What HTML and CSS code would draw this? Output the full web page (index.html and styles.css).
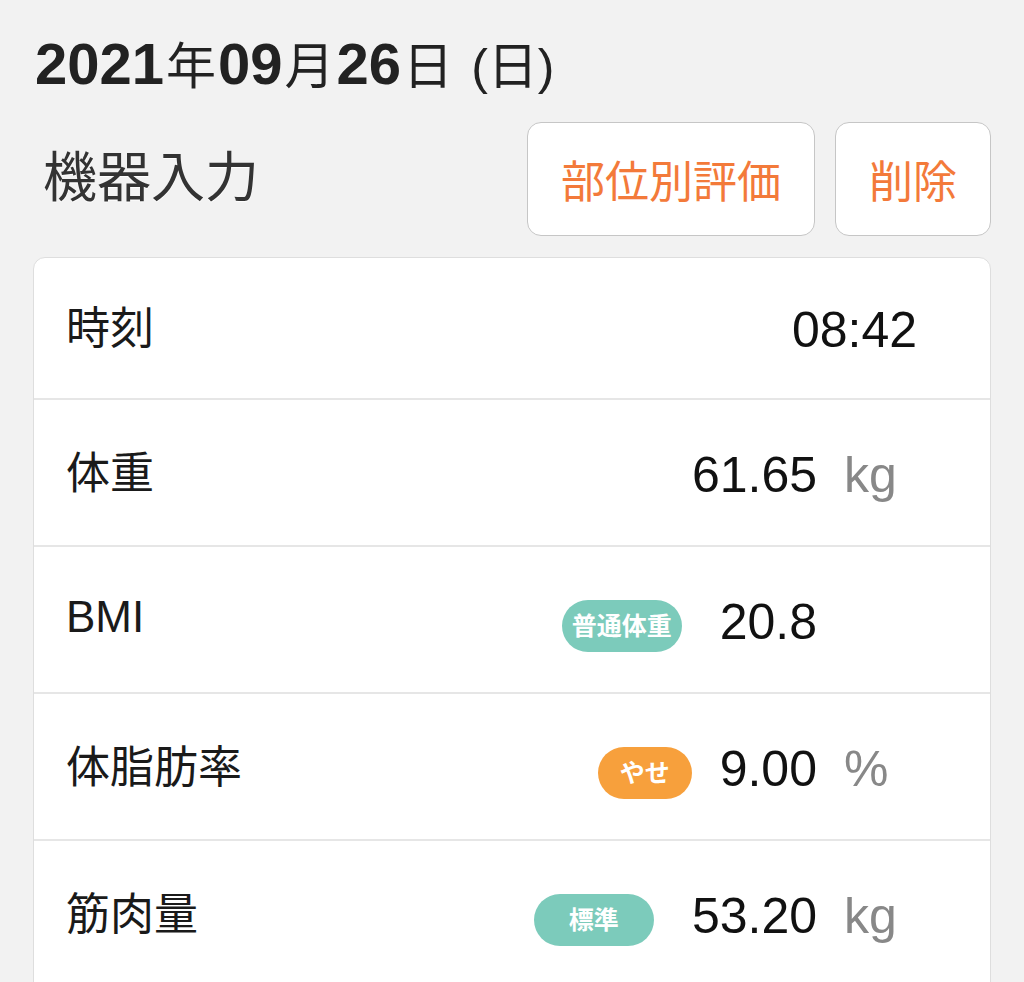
FILE: index.html
```html
<!DOCTYPE html>
<html lang="ja">
<head>
    <meta charset="UTF-8">
    <meta name="viewport" content="width=device-width, initial-scale=1.0">
    <title>機器入力</title>
    <link rel="stylesheet" href="styles.css">
</head>
<body>

<div class="page">
    <h1 class="date">
        <span class="num">2021</span><span class="kanji">年</span><span class="num">09</span><span class="kanji">月</span><span class="num">26</span><span class="kanji">日</span> <span class="weekday">(日)</span>
    </h1>

    <div class="header">
        <h2 class="title">機器入力</h2>
        <div class="actions">
            <button type="button">部位別評価</button>
            <button type="button">削除</button>
        </div>
    </div>

    <ul class="card">
        <li class="row">
            <span class="label">時刻</span>
            <span class="value">08:42</span>
        </li>
        <li class="row">
            <span class="label">体重</span>
            <span class="value">61.65</span>
            <span class="unit">kg</span>
        </li>
        <li class="row">
            <span class="label">BMI</span>
            <span class="badge teal">普通体重</span>
            <span class="value">20.8</span>
            <span class="unit"></span>
        </li>
        <li class="row">
            <span class="label">体脂肪率</span>
            <span class="badge orange">やせ</span>
            <span class="value">9.00</span>
            <span class="unit">%</span>
        </li>
        <li class="row">
            <span class="label">筋肉量</span>
            <span class="badge teal">標準</span>
            <span class="value">53.20</span>
            <span class="unit">kg</span>
        </li>
    </ul>
</div>

</body>
</html>
```

FILE: styles.css
```css
body {
    margin: 0;
    background-color: #f2f2f2;
    font-family: "Liberation Sans", "Noto Sans CJK JP", sans-serif;
    color: #1a1a1a;
}

.page {
    padding: 0 33px;
}

.date {
    margin: 0;
    padding: 29px 0 0 2px;
    line-height: 70px;
    font-size: 58px;
    font-weight: bold;
    color: #222;
}

.date .kanji,
.date .weekday {
    font-size: 50px;
    font-weight: normal;
}

.date .kanji {
    margin: 0 2px;
}

.header {
    display: flex;
    align-items: center;
    justify-content: space-between;
    margin-top: 20px;
}

.title {
    margin: 0 0 0 10px;
    padding-bottom: 12px;
    font-size: 54px;
    font-weight: normal;
    color: #333;
    text-shadow: 0 1px 1px #fff;
}

.actions {
    display: flex;
    gap: 20px;
}

button {
    height: 114px;
    padding: 0 33px;
    font-family: inherit;
    font-size: 44px;
    color: #f37a3a;
    background-color: #fff;
    border: 1.5px solid #c6c6c6;
    border-radius: 14px;
}

.card {
    list-style-type: none;
    margin: 21px 0 0;
    padding: 0 0 40px;
    background-color: #fff;
    border: 1px solid #dedede;
    border-radius: 12px;
}

.row {
    display: flex;
    align-items: center;
    height: 145px;
    padding: 0 73px 0 32px;
    border-top: 2px solid #e6e6e6;
}

.row:first-child {
    height: 140px;
    border-top: none;
}

.label {
    flex: 1;
    padding-bottom: 6px;
    font-size: 44px;
}

.value {
    padding-top: 4px;
    font-size: 50px;
    color: #111;
}

.unit {
    width: 73px;
    margin-left: 27px;
    padding-top: 4px;
    font-size: 50px;
    color: #888;
}

.badge {
    height: 52px;
    margin: 12px 38px 0 0;
    line-height: 52px;
    border-radius: 26px;
    text-align: center;
    font-size: 25px;
    font-weight: bold;
    color: #fff;
}

.badge.teal {
    width: 120px;
    background-color: #7ccbbb;
}

.badge.orange {
    width: 94px;
    margin-right: 28px;
    background-color: #f7a03c;
}
```
